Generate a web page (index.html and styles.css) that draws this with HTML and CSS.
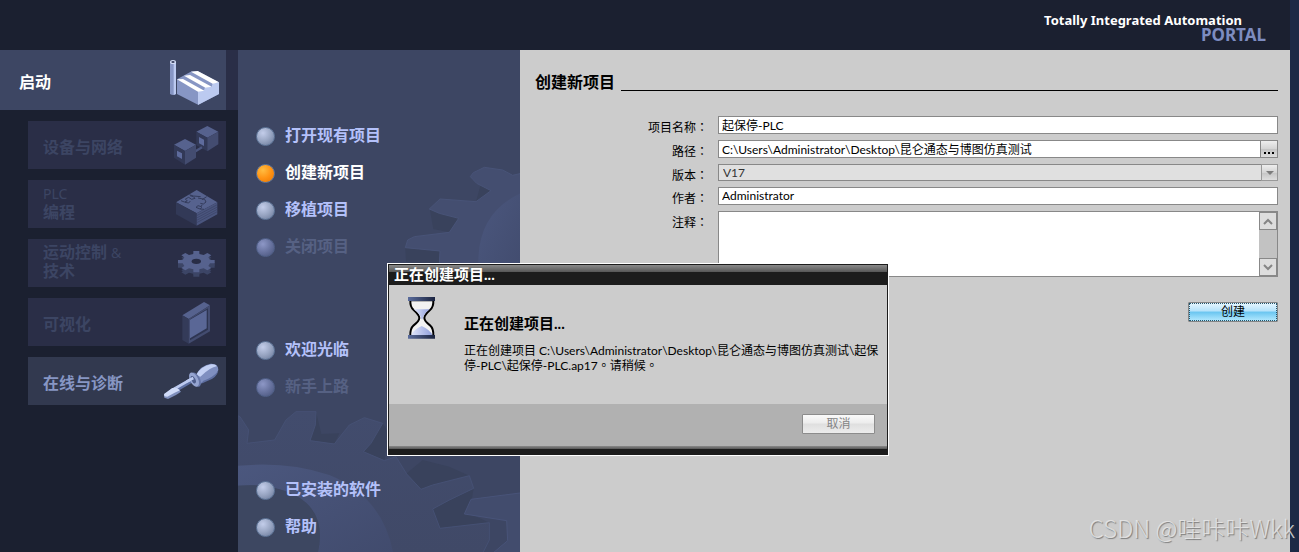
FILE: index.html
```html
<!DOCTYPE html>
<html lang="zh-CN">
<head>
<meta charset="utf-8">
<title>Totally Integrated Automation Portal</title>
<link rel="stylesheet" href="styles.css">
</head>
<body>
<div class="desktop">
  <div class="app">
    <header class="topbar">
      <div class="brand">Totally Integrated Automation</div>
      <div class="brand-sub">PORTAL</div>
    </header>
    <div class="workspace">
      <nav class="portals">
        <div class="portal-current">
          <button class="portal portal-active" type="button">
            <span>启动</span>
            <svg width="52" height="52" viewBox="507 42 156 156" aria-hidden="true">
              <path d="M510 66V162Q519 168 528 162V66Z" fill="#8796c4"/>
              <path d="M521 68V165L528 162V66Z" fill="#bccaf0"/>
              <ellipse cx="519" cy="66" rx="9" ry="6" fill="#d5def6"/>
              <ellipse cx="519" cy="66" rx="5" ry="3" fill="#3a4260"/>
              <path d="M531 118L553 106L575 94L593 93L657 127L657 162L594 194L531 162Z" fill="#8796c4"/>
              <path d="M594 154L612 151L615 142L635 140L638 130L657 127V162L594 195Z" fill="#bccaf0"/>
              <path d="M531 118L549 117L613 152L594 155Z" fill="#fff"/>
              <path d="M552 107L570 105L635 140L616 143Z" fill="#fff"/>
              <path d="M573 95L593 93L657 127L638 131Z" fill="#fff"/>
            </svg>
          </button>
        </div>
        <div class="portal-list">
          <button class="portal portal-item" type="button" disabled>
            <span>设备与网络</span>
            <svg width="60" height="44" viewBox="483 249 180 132" aria-hidden="true">
              <path d="M622 258L655 275L622 293L589 275Z" fill="#56628e"/>
              <path d="M589 275L622 293V334L589 316Z" fill="#323957"/>
              <path d="M655 275V313L622 334V293Z" fill="#434c70"/>
              <path d="M597 291L612 299V318L597 310Z" fill="#5e6b9c"/>
              <path d="M584 335L606 322" stroke="#4b567f" stroke-width="7"/>
              <path d="M555 297L588 314L555 333L522 314Z" fill="#56628e"/>
              <path d="M522 314L555 333V374L522 353Z" fill="#323957"/>
              <path d="M588 314V353L555 374V333Z" fill="#434c70"/>
              <path d="M531 332L546 340V357L531 349Z" fill="#5e6b9c"/>
            </svg>
          </button>
          <button class="portal portal-item portal-two-line" type="button" disabled>
            <span><span class="latin">PLC</span><br>编程</span>
            <svg width="60" height="44" viewBox="483 426 180 132" aria-hidden="true">
              <path d="M590 450L652 487L590 520L528 487Z" fill="#56628e"/>
              <path d="M528 487L590 520V557L528 523Z" fill="#323957"/>
              <path d="M652 487V523L590 557V520Z" fill="#4a557e"/>
              <path d="M590 527L652 494M590 534L652 501M590 541L652 508M590 548L652 515" stroke="#394163" stroke-width="2" fill="none"/>
              <path d="M543 482L553 486L562 483L556 477L566 472L575 478L585 475L580 470L570 467M555 487L566 489L571 483M568 464L580 468L602 470M594 474L614 478L618 486L610 492L601 490M620 470L606 479M612 508L600 507L588 502L594 497L604 500L606 494M600 507L606 502" stroke="#343c5c" stroke-width="3" fill="none"/>
            </svg>
          </button>
          <button class="portal portal-item portal-two-line" type="button" disabled>
            <span>运动控制 <span class="latin">&amp;</span><br>技术</span>
            <svg width="60" height="44" viewBox="483 33 180 132" aria-hidden="true">
              <defs><path id="cog" d="M55 5L41 5L36 13L45 19L33 26L22 20L9 23L9 32L-9 32L-9 23L-22 20L-33 26L-45 19L-36 13L-41 5L-55 5L-55-5L-41-5L-36-13L-45-19L-33-26L-22-20L-9-23L-9-32L9-32L9-23L22-20L33-26L45-19L36-13L41-5L55-5Z"/></defs>
              <use href="#cog" transform="translate(589 108)" fill="#3c4566"/>
              <use href="#cog" transform="translate(589 102)" fill="#3c4566"/>
              <use href="#cog" transform="translate(589 95)" fill="#56628e"/>
              <ellipse cx="589" cy="94" rx="14" ry="8" fill="#282d46"/>
            </svg>
          </button>
          <button class="portal portal-item" type="button" disabled>
            <span>可视化</span>
            <svg width="60" height="44" viewBox="483 210 180 132" aria-hidden="true">
              <path d="M547 256L612 216L630 226L566 267Z" fill="#56628e"/>
              <path d="M547 256L566 267V341L547 330Z" fill="#343b59"/>
              <path d="M566 267L630 226V304L566 341Z" fill="#434c70"/>
              <path d="M570 268L624 235V299L570 331Z" fill="#2e3552"/>
              <path d="M570 269L620 240V295L570 325Z" fill="#5a6796"/>
            </svg>
          </button>
          <button class="portal portal-item portal-ready" type="button">
            <span>在线与诊断</span>
            <svg width="60" height="44" viewBox="483 387 180 132" aria-hidden="true">
              <path d="M524 481L576 450" stroke="#5f71a4" stroke-width="14"/>
              <path d="M522 477L576 446" stroke="#bccaf0" stroke-width="8"/>
              <path d="M492 494L516 475L530 473L543 485L528 495L504 507L493 503Z" fill="#7f8fbd"/>
              <path d="M492 492L517 474L530 473L540 481L524 488L502 500L493 499Z" fill="#d0dbf8"/>
              <path d="M587 437Q601 406 632 401Q655 400 655 420Q650 439 622 450L600 461Z" fill="#7f8fc0"/>
              <path d="M588 435Q604 408 634 403Q648 402 650 409Q632 411 601 440Z" fill="#c3d0f3"/>
              <path d="M610 452Q640 442 655 422Q650 444 622 453L602 462Z" fill="#5d6ea0"/>
              <ellipse cx="588" cy="449" rx="12" ry="23" transform="rotate(-27 588 449)" fill="#6777a8"/>
              <ellipse cx="582" cy="449" rx="12" ry="23" transform="rotate(-27 582 449)" fill="#95a4d0"/>
              <ellipse cx="580" cy="449" rx="6" ry="12" transform="rotate(-27 580 449)" fill="#4e5d8b"/>
              <path d="M560 455L580 444" stroke="#bccaf0" stroke-width="8"/>
            </svg>
          </button>
        </div>
      </nav>

      <section class="actions">
        <svg class="gears" viewBox="0 0 282 502" width="282" height="502" aria-hidden="true">
          <defs>
            <linearGradient id="rim" x1="0" y1="0" x2="1" y2="1"><stop offset="0" stop-color="#4b577e"/><stop offset="1" stop-color="#414b6d"/></linearGradient>
            <linearGradient id="body" x1="0" y1="0" x2="0" y2="1"><stop offset="0" stop-color="#424c6d"/><stop offset="1" stop-color="#404967"/></linearGradient>
          </defs>
          <g transform="translate(-2 -5) scale(.33333)">
            <path d="M706 400L765 437L720 470L735 415ZM582 495L668 520L640 562L592 552ZM508 608L612 618L608 665L510 650Z" fill="#39425c"/>
            <path d="M860 384L830 391L800 375L745 367L712 383L703 395L722 415L765 437L720 470L612 462L580 492L610 505L668 520L640 562L535 575L515 585L508 608L612 618L608 700H860Z" fill="#444e70" stroke="#485377" stroke-width="3"/>
            <path d="M860 442Q727 500 727 650V720H860Z" fill="url(#rim)"/>
          </g>
          <g transform="translate(-2 250) scale(.33333)">
            <path d="M240 335L222 420L295 432L310 400L256 402ZM440 370L382 455L445 480L460 400ZM510 522L555 568L590 555L700 527L640 500L560 480ZM590 627L612 685L760 668L700 640L713 565Z" fill="#39425c"/>
            <path d="M0 345L12 350L38 390L33 430L116 420L150 360L180 335H240L238 375L222 422L295 432L340 375L385 353L440 370L405 430L382 455L445 482L480 470L512 522L555 568L590 555L700 527L713 565L640 600L590 627L612 685L760 668V720L740 760H0Z" fill="url(#body)" stroke="#455073" stroke-width="3"/>
            <path d="M0 498Q150 482 280 525Q440 590 472 760H245Q280 610 130 568Q70 550 0 558Z" fill="url(#rim)"/>
            <path d="M0 558Q70 550 130 568Q280 610 245 760H0Z" fill="#3d4761"/>
            <path d="M860 578L705 598L685 642L812 662L815 722L770 760H860Z" fill="#424c6d" stroke="#485378" stroke-width="3"/>
          </g>
        </svg>
        <div class="action-group">
          <button class="action" type="button"><i class="dot"></i>打开现有项目</button>
          <button class="action action-on" type="button"><i class="dot"></i>创建新项目</button>
          <button class="action" type="button"><i class="dot"></i>移植项目</button>
          <button class="action" type="button" disabled><i class="dot"></i>关闭项目</button>
        </div>
        <div class="action-group">
          <button class="action" type="button"><i class="dot"></i>欢迎光临</button>
          <button class="action" type="button" disabled><i class="dot"></i>新手上路</button>
        </div>
        <div class="action-group">
          <button class="action" type="button"><i class="dot"></i>已安装的软件</button>
          <button class="action" type="button"><i class="dot"></i>帮助</button>
        </div>
      </section>

      <main class="content">
        <div class="heading"><h1>创建新项目</h1><span class="rule"></span></div>
        <form class="form">
          <label for="name">项目名称<span class="mid" lang="zh-TW">：</span></label>
          <input class="field" id="name" type="text" value="起保停-PLC">
          <label for="path">路径<span class="mid" lang="zh-TW">：</span></label>
          <div class="path-row">
            <input class="field" id="path" type="text" value="C:\Users\Administrator\Desktop\昆仑通态与博图仿真测试">
            <button class="browse" type="button" aria-label="浏览"><svg width="12" height="12" viewBox="0 0 12 12" aria-hidden="true"><path d="M1 9h2v2H1zM5 9h2v2H5zM9 9h2v2H9z"/></svg></button>
          </div>
          <label for="version">版本<span class="mid" lang="zh-TW">：</span></label>
          <div class="version-row">
            <select class="field" id="version" disabled><option>V17</option></select>
            <span class="arrow"><svg width="8" height="4" viewBox="0 0 8 4" aria-hidden="true"><path d="M0 0h8L4 4z" fill="#7c7c7c"/></svg></span>
          </div>
          <label for="author">作者<span class="mid" lang="zh-TW">：</span></label>
          <input class="field" id="author" type="text" value="Administrator">
          <label for="comment">注释<span class="mid" lang="zh-TW">：</span></label>
          <div class="comment-row">
            <textarea id="comment"></textarea>
            <div class="scroll">
              <button type="button" aria-label="向上"><svg width="10" height="7" viewBox="0 0 10 7" aria-hidden="true"><path d="M1 6L5 2L9 6" fill="none" stroke="#858585" stroke-width="2"/></svg></button>
              <button type="button" aria-label="向下"><svg width="10" height="7" viewBox="0 0 10 7" aria-hidden="true"><path d="M1 1L5 5L9 1" fill="none" stroke="#858585" stroke-width="2"/></svg></button>
            </div>
          </div>
          <button class="create" type="button">创建</button>
        </form>
      </main>
    </div>
  </div>

  <div class="dialog" role="dialog" aria-labelledby="dialog-title">
    <div class="dialog-title" id="dialog-title">正在创建项目...</div>
    <div class="dialog-body">
      <svg class="hourglass" width="28" height="42" viewBox="84 126 84 126" aria-hidden="true">
        <defs>
          <linearGradient id="cap" x1="0" y1="0" x2="1" y2="0"><stop offset="0" stop-color="#5a6c9c"/><stop offset="1" stop-color="#1b2440"/></linearGradient>
          <linearGradient id="sand" x1="0" y1="0" x2="1" y2="0"><stop offset="0" stop-color="#dfe5fa"/><stop offset="1" stop-color="#8f9edb"/></linearGradient>
        </defs>
        <path d="M91 136H160Q161 156 150 165Q133 180 133 189Q133 198 150 211Q161 221 160 242H91Q90 221 101 211Q118 198 118 189Q118 180 101 165Q90 156 91 136Z" fill="#f2f2f2" stroke="#000" stroke-width="6"/>
        <path d="M101 163H149Q129 178 128 193H124Q122 178 101 163Z" fill="url(#sand)"/>
        <path d="M94 240Q99 225 125 213Q151 225 157 240Z" fill="url(#sand)"/>
        <path d="M84 126H165V138H84ZM84 240H165V251H84Z" fill="url(#cap)"/>
      </svg>
      <div class="message">
        <h2>正在创建项目...</h2>
        <p>正在创建项目 C:\Users\Administrator\Desktop\昆仑通态与博图仿真测试\起保停-PLC\起保停-PLC.ap17<span class="mid" lang="zh-TW">。</span>请稍候<span class="mid" lang="zh-TW">。</span></p>
      </div>
    </div>
    <div class="dialog-foot"><button class="cancel" type="button" disabled>取消</button></div>
    <div class="dialog-edge"></div>
  </div>
  <div class="watermark">CSDN @哇咔咔Wkk</div>
</div>
</body>
</html>
```
FILE: styles.css
```css
* { box-sizing: border-box; }
body, h1, h2, p { margin: 0; }
body {
  font: 12px/14px Lato, "Noto Sans CJK SC", sans-serif;
  color: #000;
  background: #1c2945;
}
button, input, select, textarea { font: inherit; color: inherit; margin: 0; }
button { padding: 0; border: 0; background: none; }
svg { display: block; flex: none; }

.desktop { position: relative; min-height: 100vh; padding-right: 9px; overflow: hidden; display: flex; }
.app { flex: 1; display: flex; flex-direction: column; background: #1b2030; }

.topbar {
  height: 50px;
  padding: 12px 24px 0 0;
  display: flex; flex-direction: column; align-items: flex-end;
  font-family: "Noto Sans", sans-serif;
  font-weight: 700;
}
.brand { margin-right: 24px; font-size: 13px; line-height: 16px; color: #fff; }
.brand-sub { font-size: 17px; line-height: 14px; color: #7d8cc0; }

.workspace { flex: 1; display: grid; grid-template-columns: 238px 282px 1fr; }

.portal-current { background: #2a2e47; padding-right: 12px; }
.portal {
  width: 100%;
  display: flex; align-items: center; justify-content: space-between;
  padding-right: 5px;
  line-height: 18px; font-weight: 700; text-align: left;
}
.portal > span { padding-top: 3px; }
.portal-active { height: 60px; padding-left: 19px; background: #3d4663; color: #fff; }
.portal-list { padding: 11px 12px 0 28px; display: grid; gap: 11px; }
.portal-item { height: 48px; padding-left: 15px; background: #2a2e47; color: #3c4563; }
.portal-item, .portal-active, .action, .heading h1 { font-size: 16px; }
.portal-two-line > span { padding: 0 0 4px; }
.latin { font-family: "Noto Sans", sans-serif; font-size: 14px; font-weight: 400; }
.portal-ready { background: #32394f; color: #8796c4; }

.actions { position: relative; overflow: hidden; background: #3d4663; padding: 68px 0 0 18px; display: flex; flex-direction: column; gap: 66px; }
.gears { position: absolute; left: 0; top: 0; }
.action-group { position: relative; display: flex; flex-direction: column; }
.action { height: 37px; padding-bottom: 4px; display: flex; align-items: center; gap: 10px; font-weight: 700; color: #b4c1fa; }
.action-on { color: #fff; }
.action:disabled { color: #566183; }
.dot {
  width: 19px; height: 19px; margin-top: 4px; border-radius: 50%;
  border: 1px solid #60779a;
  background: radial-gradient(circle at 35% 30%, #c3cdea, #98a5c2 50%, #667596);
}
.action-on .dot { background: radial-gradient(circle at 35% 30%, #ffbd42, #ff9314 50%, #e87500); }
.action:disabled .dot { border-color: #506088; background: radial-gradient(circle at 35% 30%, #8d97c6, #68739f 50%, #475279); }

.content { background: #ccc; padding: 22px 12px 0 15px; }
.heading { display: flex; align-items: flex-start; gap: 6px; }
.heading h1 { line-height: 20px; font-weight: 700; }
.rule { flex: 1; height: 19px; border-bottom: 1px solid #000; }
.form { margin-top: 24px; display: grid; grid-template-columns: 173px 1fr; column-gap: 10px; row-gap: 6px; }
.form label { text-align: right; padding-top: 4px; height: 17px; }
.mid { display: inline-block; line-height: 14px; font-family: "Noto Sans CJK TC", sans-serif; }
.field { width: 100%; min-width: 0; height: 18px; padding: 0 3px 2px; border: 1px solid #888; border-radius: 0; background: #fff; outline: 0; }
.path-row, .version-row, .comment-row { display: flex; min-width: 0; }
.path-row .field { border-right: 0; }
.browse, .arrow { flex: none; width: 18px; border: 1px solid #888; background: linear-gradient(#eee, #d4d4d4 50%, #c4c4c4 51%, #dedede); display: flex; align-items: center; justify-content: center; }
.version-row { height: 17px; }
.version-row .field { height: 17px; padding: 0 4px; border-right: 0; background: #e0e0e0; color: #333; appearance: none; opacity: 1; }
.arrow { width: 17px; border-color: #999; }
.comment-row { height: 66px; border: 1px solid #888; background: #fff; }
textarea { flex: 1; min-width: 0; border: 0; padding: 2px 3px; resize: none; outline: 0; background: #fff; }
.scroll { width: 18px; background: #c2c2c2; display: flex; flex-direction: column; justify-content: space-between; }
.scroll button { height: 18px; border: 1px solid #888; background: #ddd; display: flex; align-items: center; justify-content: center; }
.create {
  grid-column: 2; justify-self: end; width: 90px; height: 20px; margin-top: 19px;
  border: 1px solid #858585; border-radius: 1px;
  outline: 1px dotted #24566e; outline-offset: -2px;
  background: linear-gradient(#e8f7ff, #b4e2fa 45%, #69c5f0 50%, #b6eaff);
}

.dialog {
  position: absolute; left: 387px; top: 263px; width: 502px;
  border: 1px solid #fff; background: #1c1c1c; padding: 1px;
}
.dialog-title {
  height: 20px; padding-left: 5px;
  background: linear-gradient(#8a8a8a, #565656) 0 0 / 100% 7px no-repeat, #1c1c1c;
  color: #fff; font-size: 15px; line-height: 19px; font-weight: 700;
}
.dialog-body { min-height: 119px; padding: 12px 6px 0 19px; display: flex; gap: 28px; background: #ccc; }
.message { padding-top: 16px; }
.message h2 { font-size: 15px; line-height: 20px; font-weight: 700; margin-bottom: 11px; }
.dialog-foot { height: 42px; padding: 10px 12px 0; display: flex; justify-content: flex-end; align-items: flex-start; background: #b1b1b1; }
.cancel { width: 73px; height: 20px; border: 1px solid #8c8c8c; border-radius: 1px; background: linear-gradient(#fafafa, #ececec 45%, #dfdfdf 50%, #ececec); color: #858585; }
.dialog-edge { height: 8px; background: linear-gradient(#8a8a8a, #565656) 0 0 / 100% 3px no-repeat, #1c1c1c; }

.watermark {
  position: absolute; right: 4px; bottom: 6px;
  font: 300 24px/36px "Noto Sans CJK SC", sans-serif;
  color: rgba(235, 235, 235, .8); text-shadow: 1px 1px 1px rgba(70, 70, 70, .6);
}
```
